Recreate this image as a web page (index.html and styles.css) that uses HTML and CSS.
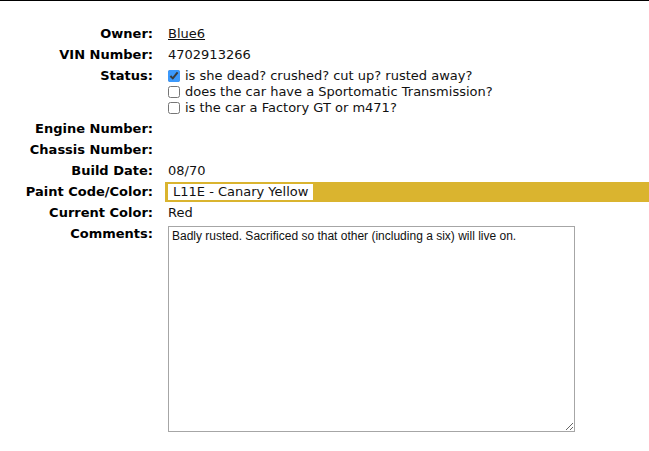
FILE: index.html
```html
<!DOCTYPE html>
<html lang="en">
<head>
    <meta charset="UTF-8">
    <meta name="viewport" content="width=device-width, initial-scale=1.0">
    <title>Car Details</title>
    <link rel="stylesheet" href="styles.css">
</head>
<body>
    <div class="topbar"></div>
    <div class="details">
        <div class="label">Owner:</div>
        <div class="value"><a href="#">Blue6</a></div>

        <div class="label">VIN Number:</div>
        <div class="value">4702913266</div>

        <div class="label">Status:</div>
        <div class="value">
            <label class="check"><input type="checkbox" checked> is she dead? crushed? cut up? rusted away?</label>
            <label class="check"><input type="checkbox"> does the car have a Sportomatic Transmission?</label>
            <label class="check"><input type="checkbox"> is the car a Factory GT or m471?</label>
        </div>

        <div class="label">Engine Number:</div>
        <div class="value"></div>

        <div class="label">Chassis Number:</div>
        <div class="value"></div>

        <div class="label">Build Date:</div>
        <div class="value">08/70</div>

        <div class="label">Paint Code/Color:</div>
        <div class="value paint"><span class="swatch-text">L11E - Canary Yellow</span></div>

        <div class="label">Current Color:</div>
        <div class="value">Red</div>

        <div class="label">Comments:</div>
        <div class="value">
            <textarea class="comments">Badly rusted. Sacrificed so that other (including a six) will live on.</textarea>
        </div>
    </div>
</body>
</html>
```

FILE: styles.css
```css
body {
    margin: 0;
    font-family: "DejaVu Sans", Verdana, sans-serif;
    font-size: 13px;
    color: #111;
    background-color: #fff;
}

.topbar {
    height: 1px;
    background-color: #000;
}

.details {
    display: grid;
    grid-template-columns: 156px 1fr;
    column-gap: 9px;
    row-gap: 1px;
    margin-top: 23px;
}

.label {
    padding: 2px 3px;
    line-height: 16px;
    text-align: right;
    font-weight: bold;
    color: #000;
}

.value {
    padding: 2px 3px;
    line-height: 16px;
}

.value a {
    color: #111;
}

.check {
    display: flex;
    align-items: center;
    height: 16px;
}

.check input {
    margin: 0 5px 0 0;
    width: 12px;
    height: 12px;
    accent-color: #3b99fc;
}

.paint {
    background-color: #dab42f;
}

.swatch-text {
    display: inline-block;
    background-color: #fff;
    padding: 0 5px;
    line-height: 16px;
}

.comments {
    display: block;
    width: 407px;
    height: 206px;
    margin: 0;
    padding: 2px 3px;
    box-sizing: border-box;
    border: 1px solid #a6a6a6;
    font-family: "Liberation Sans", Arial, sans-serif;
    font-size: 12px;
    color: #111;
    resize: both;
}
```
